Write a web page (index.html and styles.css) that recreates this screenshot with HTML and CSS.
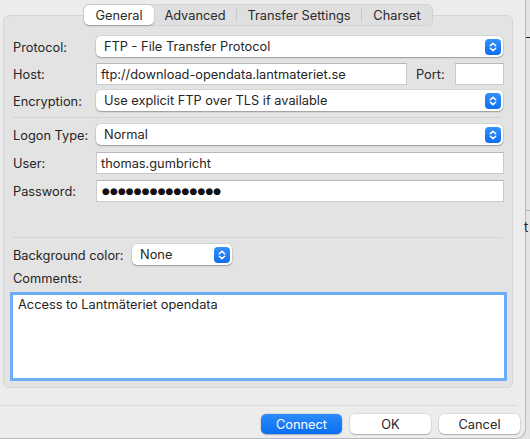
FILE: index.html
```html
<!DOCTYPE html>
<html>
<head>
<meta charset="utf-8">
<link rel="stylesheet" href="styles.css">
</head>
<body>
<div class="screen">
  <div class="window">
    <div class="tabs">
      <span class="tab tab-general active">General</span>
      <span class="tab tab-advanced">Advanced</span>
      <span class="tab-sep"></span>
      <span class="tab tab-transfer">Transfer Settings</span>
      <span class="tab-sep"></span>
      <span class="tab tab-charset">Charset</span>
    </div>
    <div class="tabbox">
      <div class="row row-sel">
        <span class="label">Protocol:</span>
        <div class="select grow">
          <span>FTP - File Transfer Protocol</span>
          <svg class="stepper" width="16" height="16" viewBox="0 0 16 16"><defs><linearGradient id="g1" x1="0" y1="0" x2="0" y2="1"><stop offset="0" stop-color="#3590f8"/><stop offset="1" stop-color="#0d6ff1"/></linearGradient></defs><rect width="16" height="16" rx="4" fill="url(#g1)"/><path d="M5.3 6.8 L8 4.4 L10.7 6.8 M5.3 9.2 L8 11.6 L10.7 9.2" fill="none" stroke="#fff" stroke-width="1.5" stroke-linecap="round" stroke-linejoin="round"/></svg>
        </div>
      </div>
      <div class="row row-field gap-a">
        <span class="label">Host:</span>
        <div class="field host">ftp://download-opendata.lantmateriet.se</div>
        <span class="port-label">Port:</span>
        <div class="field port"></div>
      </div>
      <div class="row row-sel gap-b">
        <span class="label">Encryption:</span>
        <div class="select grow">
          <span>Use explicit FTP over TLS if available</span>
          <svg class="stepper" width="16" height="16" viewBox="0 0 16 16"><rect width="16" height="16" rx="4" fill="url(#g1)"/><path d="M5.3 6.8 L8 4.4 L10.7 6.8 M5.3 9.2 L8 11.6 L10.7 9.2" fill="none" stroke="#fff" stroke-width="1.5" stroke-linecap="round" stroke-linejoin="round"/></svg>
        </div>
      </div>
      <div class="hr hr1"></div>
      <div class="row row-sel">
        <span class="label">Logon Type:</span>
        <div class="select grow">
          <span>Normal</span>
          <svg class="stepper" width="16" height="16" viewBox="0 0 16 16"><rect width="16" height="16" rx="4" fill="url(#g1)"/><path d="M5.3 6.8 L8 4.4 L10.7 6.8 M5.3 9.2 L8 11.6 L10.7 9.2" fill="none" stroke="#fff" stroke-width="1.5" stroke-linecap="round" stroke-linejoin="round"/></svg>
        </div>
      </div>
      <div class="row row-field gap-c">
        <span class="label">User:</span>
        <div class="field grow">thomas.gumbricht</div>
      </div>
      <div class="row row-field gap-d">
        <span class="label">Password:</span>
        <div class="field grow"><span class="dots">●●●●●●●●●●●●●●●</span></div>
      </div>
      <div class="hr hr2"></div>
      <div class="row row-sel">
        <span class="label bglabel">Background color:</span>
        <div class="select bgsel">
          <span>None</span>
          <svg class="stepper" width="16" height="16" viewBox="0 0 16 16"><rect width="16" height="16" rx="4" fill="url(#g1)"/><path d="M5.3 6.8 L8 4.4 L10.7 6.8 M5.3 9.2 L8 11.6 L10.7 9.2" fill="none" stroke="#fff" stroke-width="1.5" stroke-linecap="round" stroke-linejoin="round"/></svg>
        </div>
      </div>
      <div class="comments-label">Comments:</div>
      <div class="textarea">Access to Lantmäteriet opendata</div>
    </div>
    <div class="footsep"></div>
    <div class="buttons">
      <span class="btn primary">Connect</span>
      <span class="btn">OK</span>
      <span class="btn">Cancel</span>
    </div>
  </div>
  <div class="bgapp">
    <div class="bgline1"></div>
    <div class="bgline2"></div>
    <div class="bgtext">t</div>
  </div>
</div>
</body>
</html>
```
FILE: styles.css
```css
html, body {
  margin: 0;
  padding: 0;
}
body {
  background: #e2e2e2;
  font-family: Inter, "Liberation Sans", Arial, sans-serif;
  font-size: 12.8px;
  color: #262626;
}
.screen {
  display: flex;
  width: 530px;
  height: 439px;
  overflow: hidden;
}
.window {
  width: 526px;
  height: 439px;
  flex: none;
  box-sizing: border-box;
  background: #ececec;
  border-right: 1px solid #b9b9b9;
  border-bottom: 1px solid #b9b9b9;
  border-bottom-right-radius: 10px;
  display: flex;
  flex-direction: column;
  padding-top: 4px;
}
.tabs {
  display: flex;
  align-items: center;
  margin-left: 83px;
  width: 350px;
  height: 22px;
  box-sizing: border-box;
  background: #dfdfdf;
  border: 1px solid #d3d3d3;
  border-radius: 6px;
  margin-bottom: -11px;
  position: relative;
  z-index: 1;
}
.tab {
  height: 20px;
  display: flex;
  align-items: center;
  justify-content: center;
  color: #2a2a2a;
  flex: none;
}
.tab.active {
  background: #fff;
  border-radius: 5px;
  box-shadow: 0 0.5px 1.5px rgba(0,0,0,0.28);
}
.tab-general { width: 70px; }
.tab-advanced { width: 82px; }
.tab-transfer { width: 124px; }
.tab-charset { width: 70px; }
.tab-sep {
  width: 1px;
  height: 12px;
  background: #c6c6c6;
  flex: none;
}
.tabbox {
  margin: 0 12px 0 3px;
  height: 373px;
  box-sizing: border-box;
  background: #e3e3e3;
  border: 1px solid #d6d6d6;
  border-radius: 6px;
  padding: 20px 8px 9px 9px;
  display: flex;
  flex-direction: column;
}
.row {
  display: flex;
  align-items: center;
  flex: none;
}
.row-sel { height: 21px; }
.row-field { height: 22px; }
.gap-a { margin-top: 6px; }
.gap-b { margin-top: 5px; }
.gap-c { margin-top: 7px; }
.gap-d { margin-top: 6px; }
.label {
  width: 83px;
  flex: none;
  padding-top: 1px;
}
.bglabel { width: 119px; }
.grow { flex: 1; }
.select {
  height: 21px;
  box-sizing: border-box;
  background: #fff;
  border-radius: 5px;
  box-shadow: 0 0 0 0.5px rgba(0,0,0,0.12), 0 1px 1.5px rgba(0,0,0,0.28);
  display: flex;
  align-items: center;
  justify-content: space-between;
  padding: 0 2px 0 8px;
  margin-right: 1px;
}
.bgsel {
  width: 100px;
  flex: none;
}
.stepper {
  display: block;
  flex: none;
}
.field {
  height: 22px;
  box-sizing: border-box;
  background: #fff;
  border: 1px solid #c9c9c9;
  border-top-color: #b8b8b8;
  padding: 0 4px;
  display: flex;
  align-items: center;
  white-space: nowrap;
  overflow: hidden;
}
.host { width: 311px; flex: none; }
.port-label {
  margin-left: 9px;
  width: 39px;
  flex: none;
}
.port { width: 49px; flex: none; }
.dots {
  font-family: "DejaVu Sans", sans-serif;
  font-size: 9px;
  letter-spacing: 0.1px;
  color: #111;
  padding-left: 1px;
}
.hr {
  height: 1px;
  background: #d3d3d3;
  margin-right: 2px;
  flex: none;
}
.hr1 { margin-top: 6px; margin-bottom: 6px; }
.hr2 { margin-top: 35px; margin-bottom: 6px; }
.comments-label {
  margin-top: 5px;
  height: 17px;
  line-height: 17px;
  flex: none;
}
.textarea {
  margin-top: 8px;
  flex: 1;
  background: #fff;
  box-shadow: 0 0 0 3px #6dadf6;
  padding: 1px 5px;
  line-height: 17px;
}
.footsep {
  margin-top: 17px;
  height: 1px;
  margin-right: 7px;
  background: #d9d9d9;
  flex: none;
}
.buttons {
  margin-top: 8px;
  display: flex;
  justify-content: flex-end;
  gap: 8px;
  padding-right: 5px;
}
.btn {
  width: 81px;
  height: 20px;
  box-sizing: border-box;
  border-radius: 5px;
  background: #fff;
  box-shadow: 0 0 0 0.5px rgba(0,0,0,0.14), 0 1px 1px rgba(0,0,0,0.2);
  display: flex;
  align-items: center;
  justify-content: center;
  color: #262626;
}
.btn.primary {
  background: linear-gradient(#2b8bf8, #0a6ef2);
  color: #fff;
}
.bgapp {
  flex: 1;
  background: #e4e4e4;
  display: flex;
  flex-direction: column;
}
.bgline1 {
  margin-top: 37px;
  height: 1px;
  background: #1e1e1e;
}
.bgline2 {
  margin-top: 172px;
  height: 1px;
  background: #b4b4b4;
}
.bgtext {
  margin-top: 8px;
  margin-left: -2px;
  font-size: 13px;
  line-height: 16px;
  color: #222;
}
```
